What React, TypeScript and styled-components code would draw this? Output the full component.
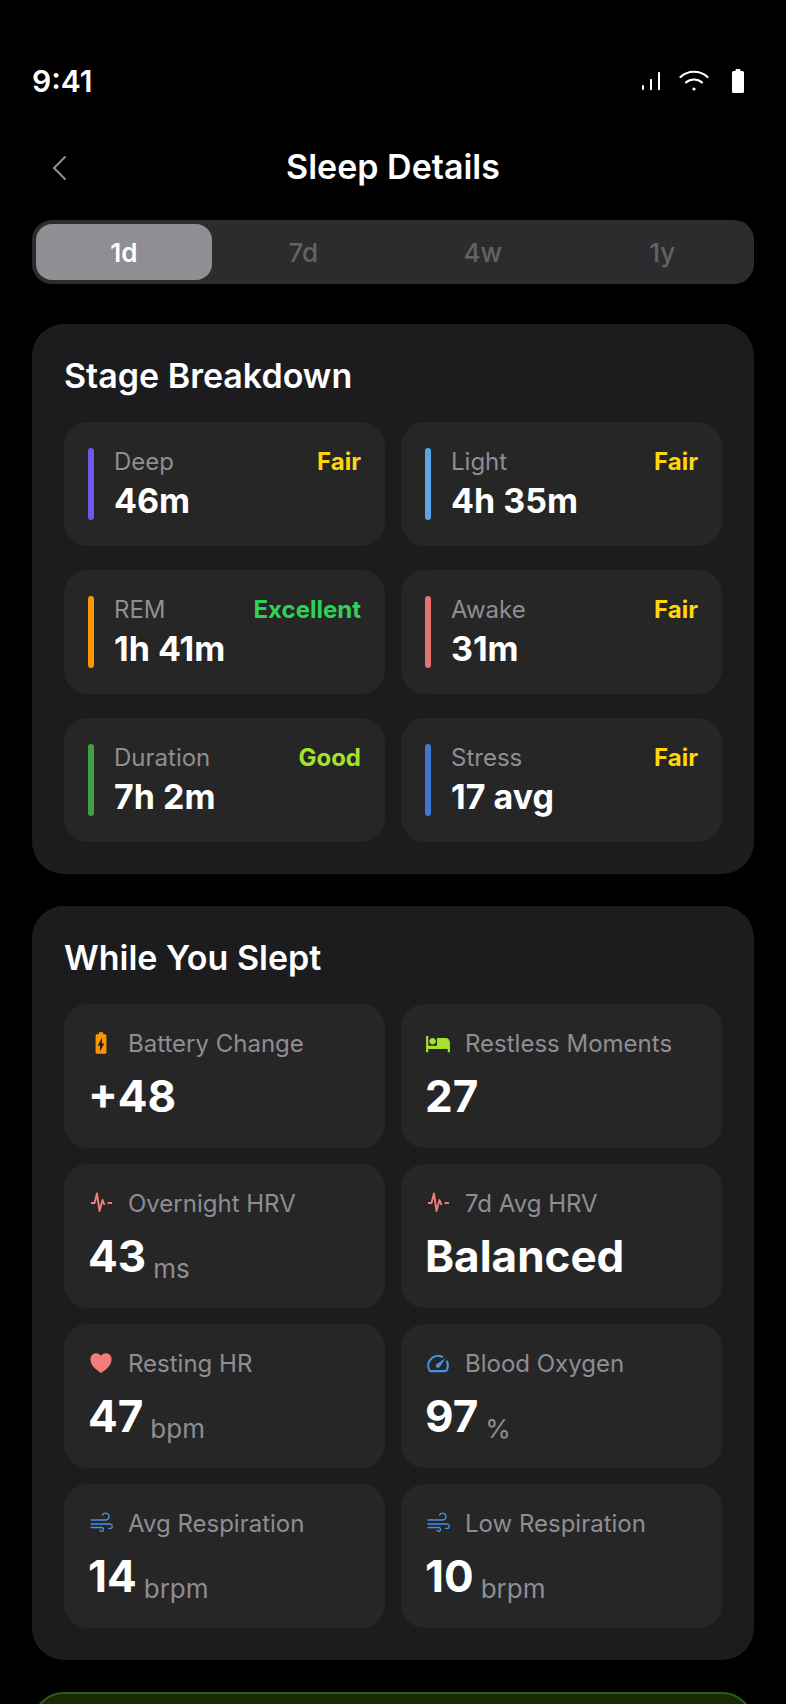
import styled, { createGlobalStyle } from 'styled-components';
import { IoHeart } from 'react-icons/io5';
import { MdBatteryChargingFull, MdHotel, MdSpeed } from 'react-icons/md';
import type { ReactNode } from 'react';

const GlobalStyle = createGlobalStyle`
  html,
  body {
    margin: 0;
    padding: 0;
    background: #000;
    overflow: hidden;
  }
  * {
    box-sizing: border-box;
  }
`;

const Page = styled.div`
  width: 786px;
  height: 1704px;
  overflow: hidden;
  padding: 60px 32px 0;
  background: #000;
  color: #fff;
  font-family: Inter, 'Liberation Sans', sans-serif;
`;

const StatusBar = styled.div`
  display: flex;
  align-items: center;
  justify-content: space-between;
  height: 42px;
`;

const Time = styled.div`
  font-size: 30px;
  font-weight: 600;
`;

const StatusIcons = styled.div`
  display: flex;
  align-items: center;
  gap: 18px;
  padding-right: 10px;
`;

const Header = styled.div`
  position: relative;
  display: flex;
  align-items: center;
  justify-content: center;
  height: 56px;
  margin-top: 36px;
`;

const BackButton = styled.div`
  position: absolute;
  left: 19px;
  top: 16px;
  line-height: 0;
`;

const Title = styled.div`
  font-size: 34px;
  font-weight: 600;
`;

const Tabs = styled.div`
  display: grid;
  grid-template-columns: repeat(4, 1fr);
  column-gap: 4px;
  height: 64px;
  margin-top: 26px;
  padding: 4px;
  border-radius: 20px;
  background: #2c2c2e;
`;

const Tab = styled.div<{ $active?: boolean }>`
  display: flex;
  align-items: center;
  justify-content: center;
  border-radius: 16px;
  font-size: 26px;
  font-weight: ${({ $active }) => {
    return $active ? 600 : 500;
  }};
  color: ${({ $active }) => {
    return $active ? '#fff' : '#636366';
  }};
  background: ${({ $active }) => {
    return $active ? '#8e8e93' : 'transparent';
  }};
`;

const Card = styled.section`
  margin-top: 40px;
  padding: 32px;
  border-radius: 32px;
  background: #1c1c1e;

  & + & {
    margin-top: 32px;
  }
`;

const CardTitle = styled.h2`
  margin: 0 0 26px;
  font-size: 34px;
  line-height: 40px;
  font-weight: 600;
`;

const Grid = styled.div<{ $rowGap: number }>`
  display: grid;
  grid-template-columns: 321px 321px;
  column-gap: 16px;
  row-gap: ${({ $rowGap }) => {
    return $rowGap;
  }}px;
`;

const StageItem = styled.div`
  display: flex;
  gap: 20px;
  height: 124px;
  padding: 24px 24px 26px;
  border-radius: 24px;
  background: #262626;
`;

const StageBar = styled.div<{ $color: string }>`
  flex: none;
  width: 6px;
  height: 72px;
  margin-top: 2px;
  border-radius: 3px;
  background: ${({ $color }) => {
    return $color;
  }};
`;

const StageBody = styled.div`
  flex: 1;
  min-width: 0;
`;

const StageTop = styled.div`
  display: flex;
  align-items: center;
  justify-content: space-between;
  height: 30px;
`;

const Label = styled.div`
  font-size: 24px;
  color: #8e8e93;
`;

const Rating = styled.div<{ $color: string }>`
  font-size: 24px;
  font-weight: 700;
  color: ${({ $color }) => {
    return $color;
  }};
`;

const StageValue = styled.div`
  margin-top: 4px;
  font-size: 34px;
  line-height: 42px;
  font-weight: 700;
`;

const VitalItem = styled.div`
  height: 144px;
  padding: 23px 24px 24px;
  border-radius: 24px;
  background: #262626;
`;

const VitalTop = styled.div`
  display: flex;
  align-items: center;
  gap: 14px;
  height: 32px;
`;

const IconSlot = styled.div<{ $color: string }>`
  display: flex;
  align-items: center;
  justify-content: center;
  width: 26px;
  height: 26px;
  line-height: 0;
  color: ${({ $color }) => {
    return $color;
  }};
`;

const VitalValue = styled.div`
  display: flex;
  align-items: flex-end;
  gap: 7px;
  margin-top: 10px;
  font-size: 44px;
  line-height: 54px;
  font-weight: 700;
`;

const Unit = styled.span`
  font-size: 26px;
  line-height: 28px;
  font-weight: 400;
  color: #8e8e93;
`;

const GreenCard = styled.section`
  height: 200px;
  margin-top: 32px;
  border: 2px solid #2f5a17;
  border-radius: 32px;
  background: #1a2a05;
`;

function PulseIcon() {
  return (
    <svg width="24" height="24" viewBox="0 0 24 24" fill="none" stroke="currentColor" strokeWidth="1.9" strokeLinejoin="round">
      <path d="M2 12h3.5L8 2.5l2.5 17.5 3-11 2 5" />
      <path d="M18.5 12H23" />
    </svg>
  );
}

function WindIcon() {
  return (
    <svg width="24" height="24" viewBox="0 0 24 24" fill="none" stroke="currentColor" strokeWidth="1.3" strokeLinecap="round">
      <path d="M2 9h14.5a3.4 3.4 0 1 0-3-4.8" />
      <path d="M2 13h19a2.2 2.2 0 0 1 0 4.4h-1.5" />
      <path d="M2 16.5h10.5a1.9 1.9 0 0 1 0 3.8 1.9 1.9 0 0 1-1.6-1" />
    </svg>
  );
}

function SignalIcon() {
  return (
    <svg width="20" height="20" viewBox="0 0 20 20" fill="#fff">
      <rect x="1" y="14" width="2" height="5" rx="1" />
      <rect x="9" y="8" width="2" height="11" rx="0.5" />
      <rect x="17" y="1" width="2" height="18" rx="0.5" />
    </svg>
  );
}

function WifiIcon() {
  return (
    <svg width="35" height="24" viewBox="0 0 35 24" fill="none" stroke="#fff" strokeWidth="2.2" strokeLinecap="round">
      <path d="M1.5 8C9 1 21 1 28.5 8" />
      <path d="M7 13.5C11.5 9.5 18.5 9.5 23 13.5" />
      <circle cx="15" cy="20" r="1.6" fill="#fff" stroke="none" />
    </svg>
  );
}

function BatteryIcon() {
  return (
    <svg width="12" height="24" viewBox="0 0 12 24" fill="#fff">
      <rect x="3.5" y="0" width="5" height="3" rx="1" />
      <rect x="0" y="2" width="12" height="22" rx="1.5" />
    </svg>
  );
}

const stages = [
  { label: 'Deep', value: '46m', rating: 'Fair', ratingColor: '#ffd60a', bar: '#7257e8' },
  { label: 'Light', value: '4h 35m', rating: 'Fair', ratingColor: '#ffd60a', bar: '#5ba4e6' },
  { label: 'REM', value: '1h 41m', rating: 'Excellent', ratingColor: '#30d158', bar: '#ff9500' },
  { label: 'Awake', value: '31m', rating: 'Fair', ratingColor: '#ffd60a', bar: '#e57373' },
  { label: 'Duration', value: '7h 2m', rating: 'Good', ratingColor: '#a4e22f', bar: '#43a047' },
  { label: 'Stress', value: '17 avg', rating: 'Fair', ratingColor: '#ffd60a', bar: '#3f78d0' },
];

const vitals: { label: string; value: string; unit?: string; color: string; icon: ReactNode }[] = [
  { label: 'Battery Change', value: '+48', color: '#ff9500', icon: <MdBatteryChargingFull size={28} /> },
  { label: 'Restless Moments', value: '27', color: '#a4e22f', icon: <MdHotel size={29} /> },
  { label: 'Overnight HRV', value: '43', unit: 'ms', color: '#f47c7c', icon: <PulseIcon /> },
  { label: '7d Avg HRV', value: 'Balanced', color: '#f47c7c', icon: <PulseIcon /> },
  { label: 'Resting HR', value: '47', unit: 'bpm', color: '#f47c7c', icon: <IoHeart size={28} /> },
  { label: 'Blood Oxygen', value: '97', unit: '%', color: '#4a90e2', icon: <MdSpeed size={29} /> },
  { label: 'Avg Respiration', value: '14', unit: 'brpm', color: '#4a90e2', icon: <WindIcon /> },
  { label: 'Low Respiration', value: '10', unit: 'brpm', color: '#4a90e2', icon: <WindIcon /> },
];

function App() {
  return (
    <>
      <GlobalStyle />
      <Page>
        <StatusBar>
          <Time>9:41</Time>
          <StatusIcons>
            <SignalIcon />
            <WifiIcon />
            <BatteryIcon />
          </StatusIcons>
        </StatusBar>

        <Header>
          <BackButton>
            <svg width="16" height="28" viewBox="0 0 16 28" fill="none" stroke="#8e8e93" strokeWidth="2" strokeLinecap="round" strokeLinejoin="round">
              <path d="M14 3 3 14l11 11" />
            </svg>
          </BackButton>
          <Title>Sleep Details</Title>
        </Header>

        <Tabs>
          <Tab $active>1d</Tab>
          <Tab>7d</Tab>
          <Tab>4w</Tab>
          <Tab>1y</Tab>
        </Tabs>

        <Card>
          <CardTitle>Stage Breakdown</CardTitle>
          <Grid $rowGap={24}>
            {stages.map((stage) => {
              return (
                <StageItem key={stage.label}>
                  <StageBar $color={stage.bar} />
                  <StageBody>
                    <StageTop>
                      <Label>{stage.label}</Label>
                      <Rating $color={stage.ratingColor}>{stage.rating}</Rating>
                    </StageTop>
                    <StageValue>{stage.value}</StageValue>
                  </StageBody>
                </StageItem>
              );
            })}
          </Grid>
        </Card>

        <Card>
          <CardTitle>While You Slept</CardTitle>
          <Grid $rowGap={16}>
            {vitals.map((vital) => {
              return (
                <VitalItem key={vital.label}>
                  <VitalTop>
                    <IconSlot $color={vital.color}>{vital.icon}</IconSlot>
                    <Label>{vital.label}</Label>
                  </VitalTop>
                  <VitalValue>
                    {vital.value}
                    {vital.unit && <Unit>{vital.unit}</Unit>}
                  </VitalValue>
                </VitalItem>
              );
            })}
          </Grid>
        </Card>

        <GreenCard />
      </Page>
    </>
  );
}

export default App;
